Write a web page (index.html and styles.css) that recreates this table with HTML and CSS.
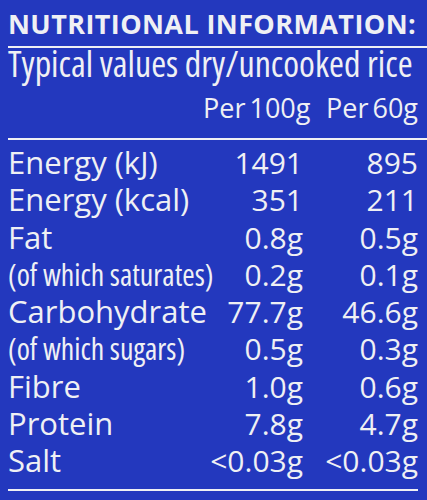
FILE: index.html
```html
<!DOCTYPE html>
<html lang="en">
<head>
    <meta charset="UTF-8" />
    <meta name="viewport" content="width=device-width, initial-scale=1.0" />
    <title>Nutritional Information</title>
    <link rel="stylesheet" href="styles.css">
</head>
<body>
    <div class="label">
        <!-- Heading -->
        <h1 class="title">NUTRITIONAL INFORMATION:</h1>
        <div class="rule rule-wide"></div>
        <p class="subtitle">Typical values dry/uncooked rice</p>

        <!-- Column headings -->
        <div class="facts facts-head">
            <span></span>
            <span class="num">Per 100g</span>
            <span class="num">Per 60g</span>
        </div>
        <div class="rule rule-wide rule-head"></div>

        <!-- Nutrient rows -->
        <div class="facts">
            <span>Energy (kJ)</span><span class="num">1491</span><span class="num">895</span>
            <span>Energy (kcal)</span><span class="num">351</span><span class="num">211</span>
            <span>Fat</span><span class="num">0.8g</span><span class="num">0.5g</span>
            <span class="sub">(of which saturates)</span><span class="num">0.2g</span><span class="num">0.1g</span>
            <span>Carbohydrate</span><span class="num">77.7g</span><span class="num">46.6g</span>
            <span class="sub">(of which sugars)</span><span class="num">0.5g</span><span class="num">0.3g</span>
            <span>Fibre</span><span class="num">1.0g</span><span class="num">0.6g</span>
            <span>Protein</span><span class="num">7.8g</span><span class="num">4.7g</span>
            <span>Salt</span><span class="num">&lt;0.03g</span><span class="num">&lt;0.03g</span>
        </div>
        <div class="rule rule-foot"></div>
    </div>
</body>
</html>
```

FILE: styles.css
```css
/* === Reset & Font === */
body, h1, p {
    margin: 0;
    padding: 0;
}

body {
    font-family: "Open Sans", "Liberation Sans", sans-serif;
    font-weight: 500;
    background: #2338be;
    color: #eff0f4;
    width: 427px;
    height: 500px;
    overflow: hidden;
}

/* === Label panel === */
.label {
    padding: 10px 9px 0 8px;
}

.title {
    font-size: 27px;
    font-weight: 700;
    line-height: 28px;
    letter-spacing: 0.4px;
    white-space: nowrap;
}

.rule {
    height: 2px;
    background: #eff0f4;
}

.rule-wide {
    margin-top: 8px;
    margin-right: -9px;
}

.subtitle {
    font-size: 36px;
    font-stretch: 87.5%;
    line-height: 32px;
    white-space: nowrap;
}

/* === Table grid === */
.facts {
    display: grid;
    grid-template-columns: minmax(0, 1fr) 100px 115px;
    font-size: 31px;
    line-height: 37.25px;
    white-space: nowrap;
}

.facts-head {
    margin-top: 11px;
    font-size: 27px;
    line-height: 34px;
    word-spacing: -3px;
}

.rule-head {
    margin-top: 13px;
    margin-bottom: 4px;
}

.sub {
    font-size: 30px;
    font-stretch: 87.5%;
}

.num {
    font-size: 30px;
    text-align: right;
}

.facts-head .num {
    font-size: 27px;
}

.rule-foot {
    margin-top: 10px;
}
```
